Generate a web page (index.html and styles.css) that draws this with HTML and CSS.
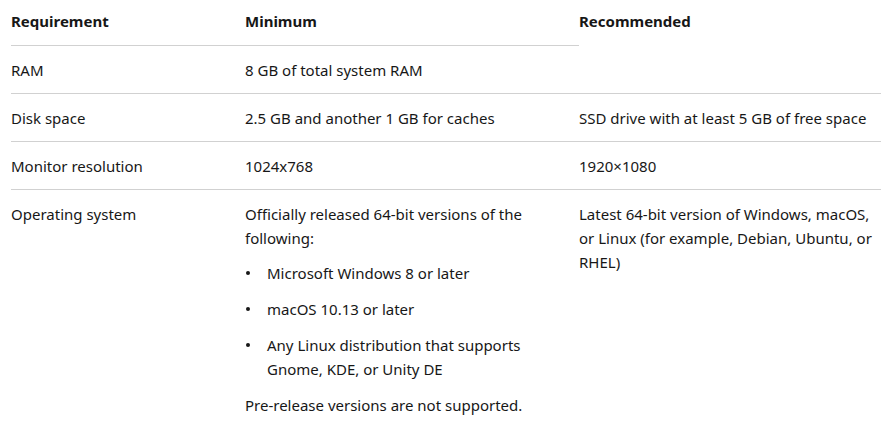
FILE: index.html
```html
<!DOCTYPE html>
<html>
<head>
<meta charset="utf-8">
<link rel="stylesheet" href="styles.css">
</head>
<body>
<div class="wrap">
<table class="req">
  <colgroup>
    <col class="c1"><col class="c2"><col class="c3">
  </colgroup>
  <tbody>
    <tr class="head">
      <th>Requirement</th>
      <th>Minimum</th>
      <th rowspan="2" class="rec">Recommended</th>
    </tr>
    <tr>
      <td>RAM</td>
      <td>8 GB of total system RAM</td>
    </tr>
    <tr>
      <td>Disk space</td>
      <td>2.5 GB and another 1 GB for caches</td>
      <td>SSD drive with at least 5 GB of free space</td>
    </tr>
    <tr>
      <td>Monitor resolution</td>
      <td>1024x768</td>
      <td>1920×1080</td>
    </tr>
    <tr class="last">
      <td>Operating system</td>
      <td>
        <p class="para">Officially released 64-bit versions of the following:</p>
        <ul class="list">
          <li>Microsoft Windows 8 or later</li>
          <li>macOS 10.13 or later</li>
          <li>Any Linux distribution that supports Gnome, KDE, or Unity DE</li>
        </ul>
        <p class="para">Pre-release versions are not supported.</p>
      </td>
      <td>Latest 64-bit version of Windows, macOS, or Linux (for example, Debian, Ubuntu, or RHEL)</td>
    </tr>
  </tbody>
</table>
</div>
</body>
</html>
```
FILE: styles.css
```css
html, body {
  margin: 0;
  padding: 0;
  background: #ffffff;
}
.wrap {
  padding-left: 11px;
}
.req {
  border-collapse: collapse;
  table-layout: fixed;
  width: 870px;
  font-family: "Noto Sans", "Noto Sans CJK KR", sans-serif;
  font-size: 15px;
  line-height: 24px;
  color: #171717;
}
.c1 { width: 234px; }
.c2 { width: 334px; }
.c3 { width: 302px; }
.req th {
  text-align: left;
  font-weight: 700;
  vertical-align: top;
  padding: 9px 6px 12px 0;
  border-bottom: 1px solid #d1d1d1;
}
.req td {
  vertical-align: top;
  padding: 12px 6px 11px 0;
  border-bottom: 1px solid #d1d1d1;
}
.req tr.last td {
  border-bottom: none;
}
.para {
  margin: 0;
}
.list {
  margin: 11px 0 12px 0;
  padding-left: 22px;
  list-style: none;
}
.list li {
  position: relative;
  margin-top: 12px;
}
.list li:first-child {
  margin-top: 0;
}
.list li::before {
  content: "";
  position: absolute;
  left: -21px;
  top: 10px;
  width: 4px;
  height: 4px;
  border-radius: 50%;
  background: #171717;
}
```
